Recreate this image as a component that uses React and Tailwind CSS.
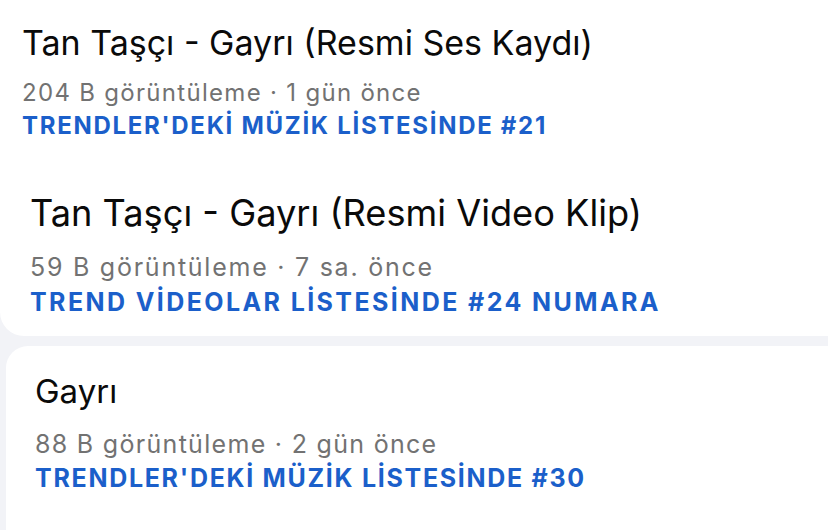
export default function App() {
  const font = { fontFamily: 'Inter, "Noto Sans", sans-serif' };
  return (
    <div className="w-[828px] h-[530px] overflow-hidden bg-[#f2f3f7]" style={font}>
      <div className="bg-white rounded-bl-[24px] h-[336px] pt-[23px] pb-[22px]">
        <div className="pl-[22px]">
          <div className="text-[34px] leading-[40px] text-[#0a0a0a] whitespace-nowrap">Tan Taşçı - Gayrı (Resmi Ses Kaydı)</div>
          <div className="mt-[16px] text-[24px] leading-[28px] tracking-[1.3px] text-[#727272] whitespace-nowrap">204 B görüntüleme · 1 gün önce</div>
          <div className="mt-[5px] text-[24px] leading-[28px] tracking-[1.7px] font-bold text-[#1b5fca] whitespace-nowrap">TRENDLER'DEKİ MÜZİK LİSTESİNDE #21</div>
        </div>
        <div className="pl-[30px] mt-[53px]">
          <div className="text-[36.2px] leading-[40px] text-[#0a0a0a] whitespace-nowrap">Tan Taşçı - Gayrı (Resmi Video Klip)</div>
          <div className="mt-[20px] text-[25px] leading-[28px] tracking-[1.75px] text-[#727272] whitespace-nowrap">59 B görüntüleme · 7 sa. önce</div>
          <div className="mt-[7px] text-[25px] leading-[28px] tracking-[2.4px] font-bold text-[#1b5fca] whitespace-nowrap">TREND VİDEOLAR LİSTESİNDE #24 NUMARA</div>
        </div>
      </div>
      <div className="mt-[10px] ml-[6px] bg-white rounded-tl-[22px] h-[200px] pt-[25px] pl-[29px]">
        <div className="text-[33px] leading-[40px] text-[#0a0a0a] whitespace-nowrap">Gayrı</div>
        <div className="mt-[19px] text-[25px] leading-[28px] tracking-[1.3px] text-[#727272] whitespace-nowrap">88 B görüntüleme · 2 gün önce</div>
        <div className="mt-[6px] text-[25px] leading-[28px] tracking-[1.7px] font-bold text-[#1b5fca] whitespace-nowrap">TRENDLER'DEKİ MÜZİK LİSTESİNDE #30</div>
      </div>
    </div>
  );
}
